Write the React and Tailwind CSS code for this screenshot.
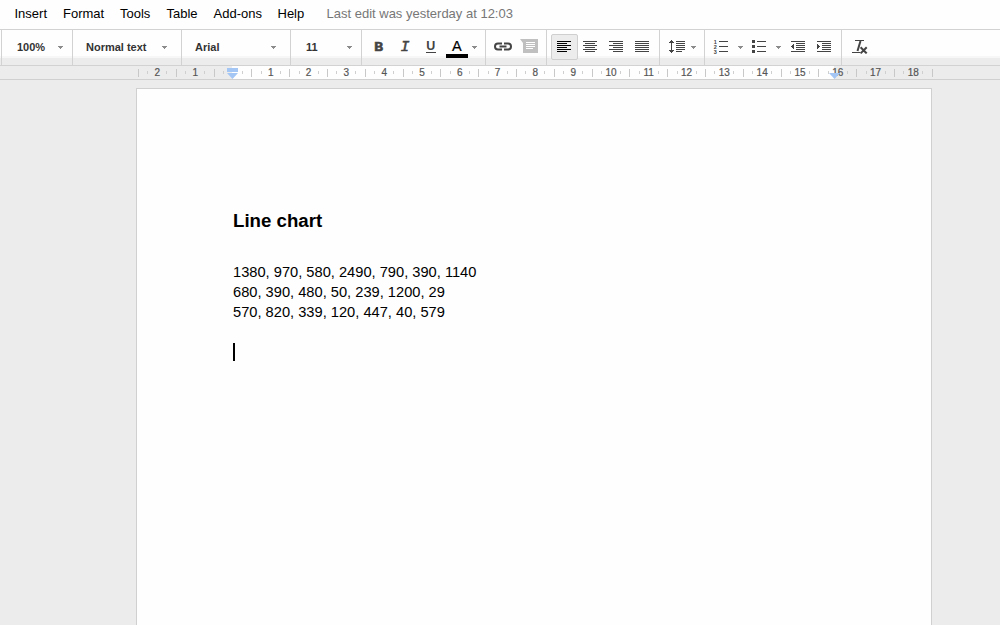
import React from "react";

const MENUS = [
  { label: "Insert", width: "w-[48.5px]" },
  { label: "Format", width: "w-[57px]" },
  { label: "Tools", width: "w-[46.5px]" },
  { label: "Table", width: "w-[47px]" },
  { label: "Add-ons", width: "w-[64px]" },
  { label: "Help", width: "w-[49px]" },
];

const RULER_MARKS = Array.from({ length: 21 }, (_, i) => i - 2);

const LINES = [
  "1380, 970, 580, 2490, 790, 390, 1140",
  "680, 390, 480, 50, 239, 1200, 29",
  "570, 820, 339, 120, 447, 40, 579",
];

function Group({ className, children }) {
  return (
    <div className={`flex h-full shrink-0 items-start border-l border-[#d2d2d2] ${className}`}>
      {children}
    </div>
  );
}

// Toolbar icons share one coordinate space: x runs along the toolbar, y from its top edge.
function Icon({ x, w, children }) {
  return (
    <svg
      className="block shrink-0"
      width={w}
      height="35"
      viewBox={`${x} 30 ${w} 35`}
      fill="#444"
      shapeRendering="crispEdges"
    >
      {children}
    </svg>
  );
}

function Caret({ x, w }) {
  return (
    <Icon x={x} w={w}>
      <path d={`M${x} 46h5v1h-1v1h-1v1h-1v-1h-1v-1h-1z`} fill="#8b8b8b" />
    </Icon>
  );
}

function Label({ className, children }) {
  return (
    <span
      className={`h-[35px] shrink-0 whitespace-nowrap text-[11px] leading-[35px] font-bold text-[#333] ${className}`}
    >
      {children}
    </span>
  );
}

function Bars({ x, offsets, color = "#444" }) {
  return offsets.map(([dx, w], i) => (
    <rect key={i} x={x + dx} y={41 + i * 2} width={w} height="1" fill={color} />
  ));
}

const LEFT = [[0, 14], [0, 10], [0, 14], [0, 10], [0, 14], [0, 10]];
const CENTER = [[0, 14], [2, 10], [0, 14], [2, 10], [0, 14], [2, 10]];
const RIGHT = [[0, 14], [4, 10], [0, 14], [4, 10], [0, 14], [4, 10]];
const FULL = [[0, 14], [0, 14], [0, 14], [0, 14], [0, 14], [0, 14]];
const INDENT = [[0, 14], [5, 9], [5, 9], [5, 9], [5, 9], [0, 14]];

function Toolbar() {
  return (
    <div className="flex h-[37px] border-y border-[#d2d2d2] bg-[linear-gradient(to_bottom,#fefefe_26px,#f7f7f7_26px,#f7f7f7_28px,#ececec_28px)] pl-px">
      <Group className="w-[71px]">
        <Label className="w-[41px] ml-[15px]">100%</Label>
        <Caret x={58} w={6} />
      </Group>
      <Group className="w-[109px]">
        <Label className="w-[76px] ml-[13px]">Normal text</Label>
        <Caret x={162} w={6} />
      </Group>
      <Group className="w-[109px]">
        <Label className="w-[76px] ml-[13px]">Arial</Label>
        <Caret x={271} w={6} />
      </Group>
      <Group className="w-[71px]">
        <Label className="w-[41px] ml-[15px]">11</Label>
        <Caret x={347} w={6} />
      </Group>
      <Group className="w-[124px]">
        <Icon x={362} w={110}>
          <text x="374.2" y="51" fontFamily="DejaVu Sans Mono, monospace" fontWeight="bold" fontSize="12" stroke="#444" strokeWidth="0.5" textLength="9" lengthAdjust="spacingAndGlyphs">B</text>
          <text x="400.5" y="51" fontFamily="Liberation Mono, monospace" fontStyle="italic" fontSize="14" stroke="#444" strokeWidth="0.5" textLength="9" lengthAdjust="spacingAndGlyphs">I</text>
          <text x="426.3" y="50" fontFamily="Liberation Sans, sans-serif" fontWeight="bold" fontSize="12" textLength="9" lengthAdjust="spacingAndGlyphs">U</text>
          <rect x="426" y="52" width="10" height="1" />
          <text x="452" y="51" fontFamily="Liberation Sans, sans-serif" fontSize="14.5" fill="#000" stroke="#000" strokeWidth="0.2">A</text>
          <rect x="446" y="54" width="22" height="4" fill="#000" />
        </Icon>
        <Caret x={472} w={6} />
      </Group>
      <Group className="w-[61px]">
        <Icon x={486} w={60}>
          <g shapeRendering="auto" fill="none" stroke="#444" strokeWidth="2">
            <path d="M502 43.5h-4a3 3 0 0 0 0 6h4M504 43.5h4a3 3 0 0 1 0 6h-4M499.5 46.5h7" />
          </g>
          <path d="M520 39h18v14h-15v-10z" fill="#c0c0c0" shapeRendering="auto" />
          <path d="M526 42h9v1h-9zM526 44h9v1h-9zM526 46h9v1h-9zM526 48h7v1h-7z" fill="#fff" />
        </Icon>
      </Group>
      <Group className="w-[113px]">
        <div className="mt-1 ml-1 flex h-[26px] w-[27px] items-start rounded-[2px] border border-[#cfcfcf] bg-[#ececec]">
          <svg width="14" height="12" viewBox="557 41 14 12" className="mt-1.5 ml-[5px] block" shapeRendering="crispEdges">
            <Bars x={557} offsets={LEFT} color="#000" />
          </svg>
        </div>
        <Icon x={578} w={81}>
          <Bars x={583} offsets={CENTER} />
          <Bars x={609} offsets={RIGHT} />
          <Bars x={635} offsets={FULL} />
        </Icon>
      </Group>
      <Group className="w-[45px]">
        <Icon x={660} w={31}>
          <path d="M671 40h1v1h1v1h1v1h-2v7h2v1h-1v1h-1v1h-1v-1h-1v-1h-1v-1h2v-7h-2v-1h1v-1h1z" />
          <Bars x={676} offsets={[[0, 9], [0, 9], [0, 9], [0, 9], [0, 9], [0, 6]]} />
        </Icon>
        <Caret x={691} w={6} />
      </Group>
      <Group className="w-[137px]">
        <Icon x={705} w={33}>
          <g fontFamily="Liberation Sans, sans-serif" fontWeight="bold" fontSize="5.5">
            <text x="713.8" y="44">1</text>
            <text x="713.8" y="49">2</text>
            <text x="713.8" y="54">3</text>
          </g>
          <path d="M719 41h9v1h-9zM719 46h9v1h-9zM719 51h9v1h-9z" />
        </Icon>
        <Caret x={738} w={5} />
        <Icon x={743} w={33}>
          <path d="M752 40h3v3h-3zM752 45h3v3h-3zM752 50h3v3h-3z" />
          <path d="M757 41h9v1h-9zM757 46h9v1h-9zM757 51h9v1h-9z" />
        </Icon>
        <Caret x={776} w={5} />
        <Icon x={781} w={60}>
          <Bars x={791} offsets={INDENT} />
          <path d="M794 44v5h-1v-1h-1v-1h-1v-1h1v-1h1v-1z" />
          <Bars x={817} offsets={INDENT} />
          <path d="M817 44h1v1h1v1h1v1h-1v1h-1v1h-1z" />
        </Icon>
      </Group>
      <Group className="w-[40px]">
        <Icon x={842} w={30}>
          <path d="M855 40h9v1h-9zM852 52h8v1h-8z" />
          <g shapeRendering="auto" stroke="#444" fill="none">
            <path d="M860.5 41L857.5 51" strokeWidth="2" />
            <path d="M861.3 48L866 52.7M866 48L861.3 52.7" strokeWidth="2" strokeLinecap="square" />
          </g>
        </Icon>
      </Group>
    </div>
  );
}

function RulerCell({ mark }) {
  return (
    <div className="flex h-[13px] w-[37.8px] shrink-0 items-center">
      <span className="h-2 w-px shrink-0 bg-[#c8c8c8]" />
      <span className="ml-[8.4px] h-[3px] w-px shrink-0 bg-[#cfcfcf]" />
      <span className="w-[18px] shrink-0 text-center text-[10px] leading-[13px] text-[#555] [-webkit-text-stroke:0.2px_#555]">
        {mark === 0 ? "" : Math.abs(mark)}
      </span>
      <span className="h-[3px] w-px shrink-0 bg-[#cfcfcf]" />
    </div>
  );
}

function Ruler() {
  return (
    <div className="relative flex h-[14px] border-b border-[#d0d0d0] bg-[linear-gradient(to_right,#ececec_232px,#fefefe_232px,#fefefe_834px,#ececec_834px)] pl-[138px]">
      {RULER_MARKS.map((mark) => (
        <RulerCell key={mark} mark={mark} />
      ))}
      <span className="h-[13px] w-px shrink-0 py-[2.5px]">
        <span className="block h-2 w-px bg-[#c8c8c8]" />
      </span>
      <svg className="absolute top-[2px] left-[227px]" width="11" height="11" viewBox="0 0 11 11" fill="#a4c6f5">
        <path d="M0 0h11v4H0zM0 5h11L5.5 11z" />
      </svg>
      <svg className="absolute top-[7px] left-[829px]" width="11" height="6" viewBox="0 0 11 6" fill="#a4c6f5">
        <path d="M0 0h11L5.5 6z" />
      </svg>
    </div>
  );
}

export default function App() {
  return (
    <div className="flex h-[625px] w-[1000px] flex-col overflow-hidden bg-[#ececec] font-['Liberation_Sans',Arial,sans-serif]">
      <nav className="flex h-[29px] shrink-0 items-center bg-[#fefefe] pb-px pl-[14.5px] text-[13px] text-black">
        {MENUS.map((menu) => (
          <span key={menu.label} className={`shrink-0 ${menu.width}`}>
            {menu.label}
          </span>
        ))}
        <span className="text-[#777]">Last edit was yesterday at 12:03</span>
      </nav>
      <Toolbar />
      <Ruler />
      <main className="mt-2 ml-[136px] w-[796px] grow border border-b-0 border-[#d0d0d0] bg-[#fefefe] pt-[120px] pl-24 text-black">
        <h1 className="text-[18.67px] leading-6 font-bold">Line chart</h1>
        <div className="mt-[29px] text-[14.67px] leading-5">
          {LINES.map((line) => (
            <p key={line}>{line}</p>
          ))}
        </div>
        <div className="mt-[21px] h-[18px] w-[2px] bg-black" />
      </main>
    </div>
  );
}
